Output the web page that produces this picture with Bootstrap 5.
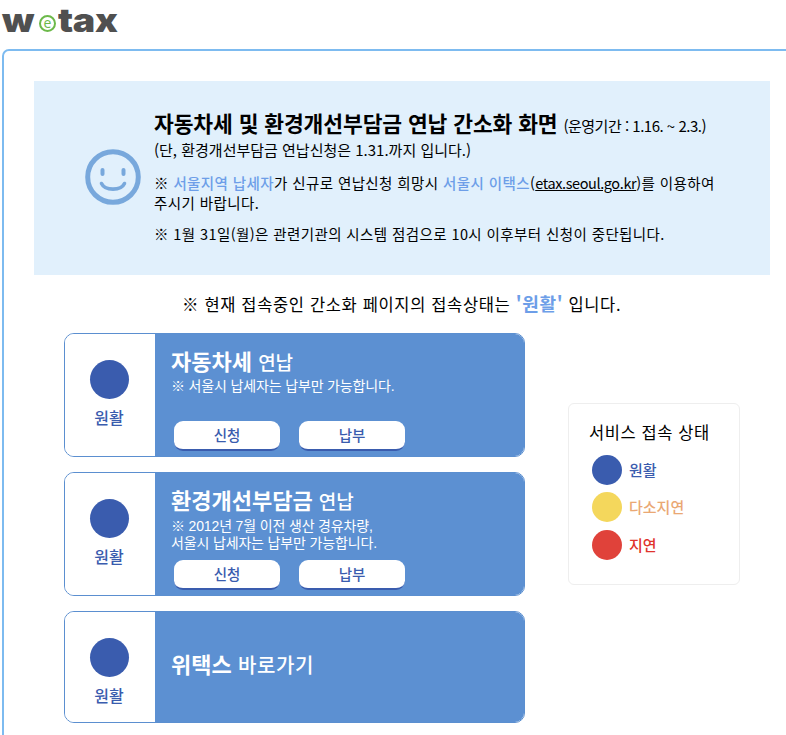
<!DOCTYPE html>
<html lang="ko">
<head>
<meta charset="utf-8">
<title>wetax</title>
<link href="https://cdn.jsdelivr.net/npm/bootstrap@5.3.0/dist/css/bootstrap.min.css" rel="stylesheet">
<style>
html,body{overflow:hidden;height:735px}
body{font-family:"Noto Sans CJK KR","Liberation Sans",sans-serif;color:#000;background:#fff;font-size:14px}
.logo-row{height:49px;padding-left:2px}
.logo-word{font-family:"Inter",sans-serif;font-weight:900;font-size:33px;line-height:40px;letter-spacing:-.3px;color:#505050;transform-origin:left center}
.logo-w{width:37px;transform:scaleX(1.12)}
.logo-t{transform:scaleX(1.14)}
.logo-e{width:17px;height:17px;border:2px solid #6cb94a;border-radius:50%;color:#6cb94a;font:400 14px/12px "Open Sans",sans-serif;text-align:center;margin:15px 2px 0 0;flex:none}
.frame{margin:0 -12px 0 2px;height:700px;border:2px solid #7dbbf0;border-radius:7px 7px 0 0;padding:30px 0 0 30px}
.notice{width:736px;height:194px;background:#e1f0fc;padding:27px 50px 0 120px;position:relative}
.smile{position:absolute;left:51px;top:68px}
.notice h1{font-size:21.5px;font-weight:700;line-height:30px;margin:0;letter-spacing:-.1px;white-space:nowrap}
.notice h1 small{font-size:15px;font-weight:400;letter-spacing:-.5px}
.sub-line{font-size:15px;line-height:18px;margin:0 0 14px}
.note-line{font-size:14.5px;line-height:20px;margin:0;letter-spacing:.4px;white-space:nowrap}
.note-gap{margin-top:11px}
.note-line a{color:#000;letter-spacing:-.4px}
.hl{color:#6d9ee8;font-weight:500}
.status-line{font-size:16.5px;line-height:24px;width:736px;margin:16px 0 0;padding-left:148px;letter-spacing:.65px;white-space:nowrap}
.status-line b{color:#6d9ee8;font-size:18px;font-weight:700}
.main-zone{margin:17px 0 0 30px;width:676px}
.svc-list{width:461px;gap:15px}
.svc{height:124px;border:1px solid #5b8fd0;border-radius:10px;overflow:hidden}
.svc-sm{height:112px}
.svc-side{width:90px;flex:none;background:#fff;color:#3a5cae;font-weight:500;font-size:16px;line-height:20px;padding:26px 2px 0 0;gap:8px}
.dot{width:39px;height:39px;border-radius:50%;display:block}
.dot-blue{background:#3a5cae}
.dot-yellow{background:#f4d75c}
.dot-red{background:#e0423a}
.svc-main{background:#5c90d2;color:#fff;padding:11px 16px 0}
.svc-title{font-size:22px;line-height:30px;font-weight:700;margin:0}
.svc-title span{font-size:19px;font-weight:500}
.svc-desc{font-family:"Liberation Sans","Noto Sans CJK KR",sans-serif;font-size:14px;line-height:17px;letter-spacing:-.15px;margin:1px 0 0;font-weight:400}
.svc-desc-two{margin-top:2px}
.svc-btn{width:106px;height:30px;background:#fff;border:0;border-bottom:2px solid #3a5cae;border-radius:9px;color:#3a5cae;font-size:14.5px;font-weight:500;line-height:26px;padding:0;text-align:center}
.btn-row{gap:19px;position:absolute;left:19px;bottom:5px}
.go-main{padding:0 16px 6px}
.go-main .svc-title span{font-size:20px;letter-spacing:.6px}
.legend{width:172px;height:182px;border:1px solid #eee;border-radius:6px;margin-top:70px;padding:16px 20px}
.legend h2{font-size:16.5px;font-weight:400;line-height:24px;margin:0 0 7px;white-space:nowrap;letter-spacing:.6px}
.legend-item{height:37.6px;gap:7px;font-size:15px;font-weight:500;padding-left:3px}
.legend-item .dot{width:30px;height:30px}
.t-blue{color:#3a5cae}
.t-orange{color:#eaa874}
.t-red{color:#e0342c}
</style>
</head>
<body>
<div class="logo-row d-flex align-items-start">
  <span class="logo-word logo-w">w</span><span class="logo-e">e</span><span class="logo-word logo-t">tax</span>
</div>
<div class="frame">
  <div class="notice">
    <svg class="smile" width="56" height="56" viewBox="0 0 56 56" aria-hidden="true">
      <circle cx="28" cy="28" r="25.3" fill="none" stroke="#78a8dc" stroke-width="5"/>
      <rect x="15.5" y="19" width="4" height="8" rx="2" fill="#78a8dc"/>
      <rect x="36.5" y="19" width="4" height="8" rx="2" fill="#78a8dc"/>
      <path d="M16.5 34.5C20 42 36 42 39.5 34.5" fill="none" stroke="#78a8dc" stroke-width="3.6" stroke-linecap="round"/>
    </svg>
    <h1>자동차세 및 환경개선부담금 연납 간소화 화면 <small>(운영기간 : 1.16. ~ 2.3.)</small></h1>
    <p class="sub-line">(단, 환경개선부담금 연납신청은 1.31.까지 입니다.)</p>
    <div class="note-line">※ <span class="hl">서울지역 납세자</span>가 신규로 연납신청 희망시 <span class="hl">서울시 이택스</span>(<a href="#">etax.seoul.go.kr</a>)를 이용하여</div>
    <div class="note-line">주시기 바랍니다.</div>
    <div class="note-line note-gap">※ 1월 31일(월)은 관련기관의 시스템 점검으로 10시 이후부터 신청이 중단됩니다.</div>
  </div>
  <p class="status-line">※ 현재 접속중인 간소화 페이지의 접속상태는 <b>'원활'</b> 입니다.</p>
  <div class="main-zone d-flex justify-content-between align-items-start">
    <div class="svc-list d-flex flex-column">
      <div class="svc d-flex">
        <div class="svc-side d-flex flex-column align-items-center"><span class="dot dot-blue"></span>원활</div>
        <div class="svc-main flex-grow-1 position-relative">
          <p class="svc-title">자동차세 <span>연납</span></p>
          <p class="svc-desc">※ 서울시 납세자는 납부만 가능합니다.</p>
          <div class="btn-row d-flex"><button class="svc-btn">신청</button><button class="svc-btn">납부</button></div>
        </div>
      </div>
      <div class="svc d-flex">
        <div class="svc-side d-flex flex-column align-items-center"><span class="dot dot-blue"></span>원활</div>
        <div class="svc-main flex-grow-1 position-relative">
          <p class="svc-title">환경개선부담금 <span>연납</span></p>
          <p class="svc-desc svc-desc-two">※ 2012년 7월 이전 생산 경유차량,<br>서울시 납세자는 납부만 가능합니다.</p>
          <div class="btn-row d-flex"><button class="svc-btn">신청</button><button class="svc-btn">납부</button></div>
        </div>
      </div>
      <div class="svc svc-sm d-flex">
        <div class="svc-side d-flex flex-column align-items-center"><span class="dot dot-blue"></span>원활</div>
        <div class="svc-main go-main flex-grow-1 d-flex align-items-center">
          <p class="svc-title">위택스 <span>바로가기</span></p>
        </div>
      </div>
    </div>
    <div class="legend">
      <h2>서비스 접속 상태</h2>
      <div class="legend-item d-flex align-items-center"><span class="dot dot-blue"></span><span class="t-blue">원활</span></div>
      <div class="legend-item d-flex align-items-center"><span class="dot dot-yellow"></span><span class="t-orange">다소지연</span></div>
      <div class="legend-item d-flex align-items-center"><span class="dot dot-red"></span><span class="t-red">지연</span></div>
    </div>
  </div>
</div>
</body>
</html>
